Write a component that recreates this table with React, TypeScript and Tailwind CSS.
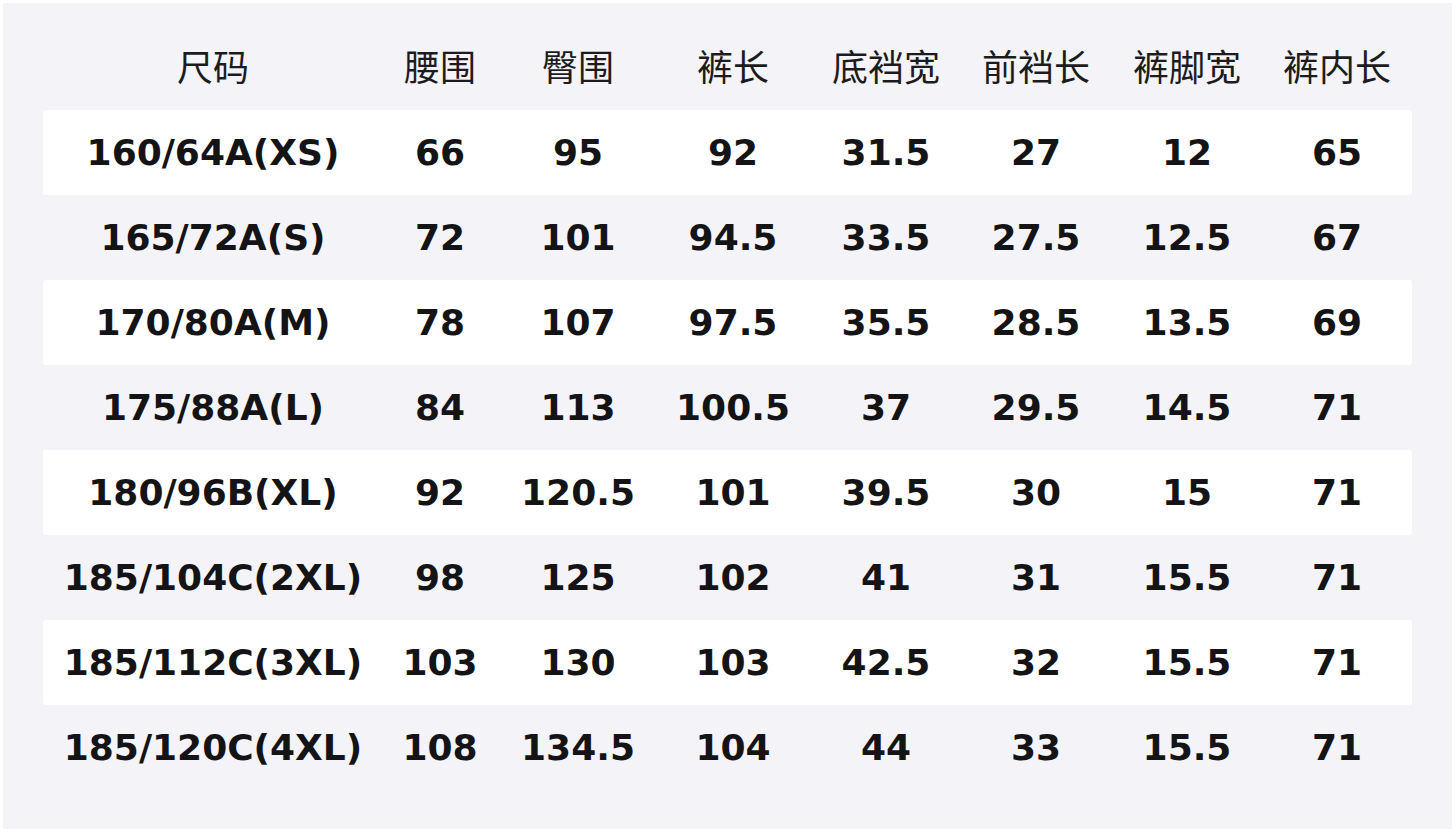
const headers = ["尺码", "腰围", "臀围", "裤长", "底裆宽", "前裆长", "裤脚宽", "裤内长"];

const rows = [
  ["160/64A(XS)", "66", "95", "92", "31.5", "27", "12", "65"],
  ["165/72A(S)", "72", "101", "94.5", "33.5", "27.5", "12.5", "67"],
  ["170/80A(M)", "78", "107", "97.5", "35.5", "28.5", "13.5", "69"],
  ["175/88A(L)", "84", "113", "100.5", "37", "29.5", "14.5", "71"],
  ["180/96B(XL)", "92", "120.5", "101", "39.5", "30", "15", "71"],
  ["185/104C(2XL)", "98", "125", "102", "41", "31", "15.5", "71"],
  ["185/112C(3XL)", "103", "130", "103", "42.5", "32", "15.5", "71"],
  ["185/120C(4XL)", "108", "134.5", "104", "44", "33", "15.5", "71"],
];

const cols = "grid grid-cols-[340px_114px_162px_148px_158px_142px_160px_140px] pr-[6px]";

export default function App() {
  return (
    <div className="h-[833px] w-[1456px] bg-white pl-[3px] pt-[3px]">
      <div className="h-[826px] w-[1449px] bg-[#f3f3f8] px-[40px] pt-[20px]">
        <div className={`${cols} h-[87px] items-center text-center text-[36px] text-[#1c1c1e] [font-family:'Noto_Sans_CJK_SC',sans-serif]`}>
          {headers.map((h) => (
            <div key={h} className="pb-[4px]">{h}</div>
          ))}
        </div>
        {rows.map((r, i) => (
          <div
            key={r[0]}
            className={`${cols} h-[85px] items-center rounded-[3px] text-center text-[36px] font-bold text-[#141416] [font-family:'DejaVu_Sans',sans-serif] ${
              i % 2 === 0 ? "bg-white" : "bg-transparent"
            }`}
          >
            {r.map((c, j) => (
              <div key={j}>{c}</div>
            ))}
          </div>
        ))}
      </div>
    </div>
  );
}
